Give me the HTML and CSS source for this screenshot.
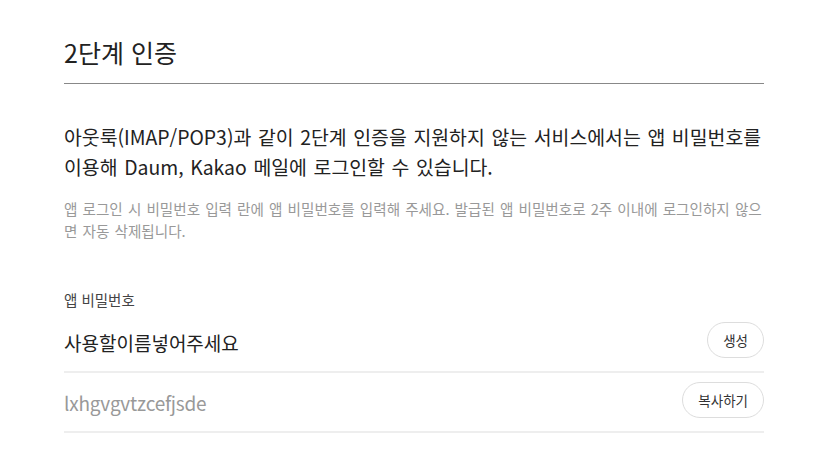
FILE: index.html
```html
<!DOCTYPE html>
<html lang="ko">
<head>
<meta charset="utf-8">
<link rel="stylesheet" href="styles.css">
</head>
<body>
<div class="page">
  <h1 class="title">2단계 인증</h1>
  <p class="lead">아웃룩(IMAP/POP3)과 같이 2단계 인증을 지원하지 않는 서비스에서는 앱 비밀번호를 이용해 Daum, Kakao 메일에 로그인할 수 있습니다.</p>
  <p class="note">앱 로그인 시 비밀번호 입력 란에 앱 비밀번호를 입력해 주세요. 발급된 앱 비밀번호로 2주 이내에 로그인하지 않으면 자동 삭제됩니다.</p>
  <div class="label">앱 비밀번호</div>
  <div class="row">
    <span class="value">사용할이름넣어주세요</span>
    <button class="btn">생성</button>
  </div>
  <div class="row">
    <span class="value muted">lxhgvgvtzcefjsde</span>
    <button class="btn">복사하기</button>
  </div>
</div>
</body>
</html>
```

FILE: styles.css
```css
* { box-sizing: border-box; }
html, body { margin: 0; padding: 0; background: #fff; }
body {
  font-family: "Noto Sans CJK KR", "Noto Sans", sans-serif;
  color: #222;
}
.page {
  width: 700px;
  margin-left: 64px;
  padding-top: 34px;
}
.title {
  margin: 0;
  font-size: 25px;
  font-weight: 400;
  line-height: 36px;
  padding-bottom: 13px;
  border-bottom: 1px solid #888;
}
.lead {
  margin: 38px 0 0;
  font-size: 19.4px;
  line-height: 30px;
  word-spacing: 1.2px;
  word-break: keep-all;
}
.note {
  margin: 16px 0 0;
  font-size: 14.6px;
  line-height: 22px;
  word-spacing: 1px;
  color: #999;
}
.label {
  margin-top: 48px;
  font-size: 14.5px;
  line-height: 20px;
  color: #444;
}
.row {
  display: flex;
  align-items: center;
  justify-content: space-between;
  padding: 12px 0 13px;
  border-bottom: 2px solid #eee;
}
.row + .row { padding-top: 9px; }
.value {
  font-size: 19px;
  line-height: 26px;
  padding-top: 6px;
  color: #222;
}
.value.muted { color: #999; letter-spacing: -0.2px; }
.btn {
  height: 36px;
  padding: 0 15px;
  border: 1px solid #ddd;
  border-radius: 18px;
  background: #fff;
  font-family: "Noto Sans CJK KR", "Noto Sans", sans-serif;
  font-size: 13.5px;
  color: #333;
}
```
